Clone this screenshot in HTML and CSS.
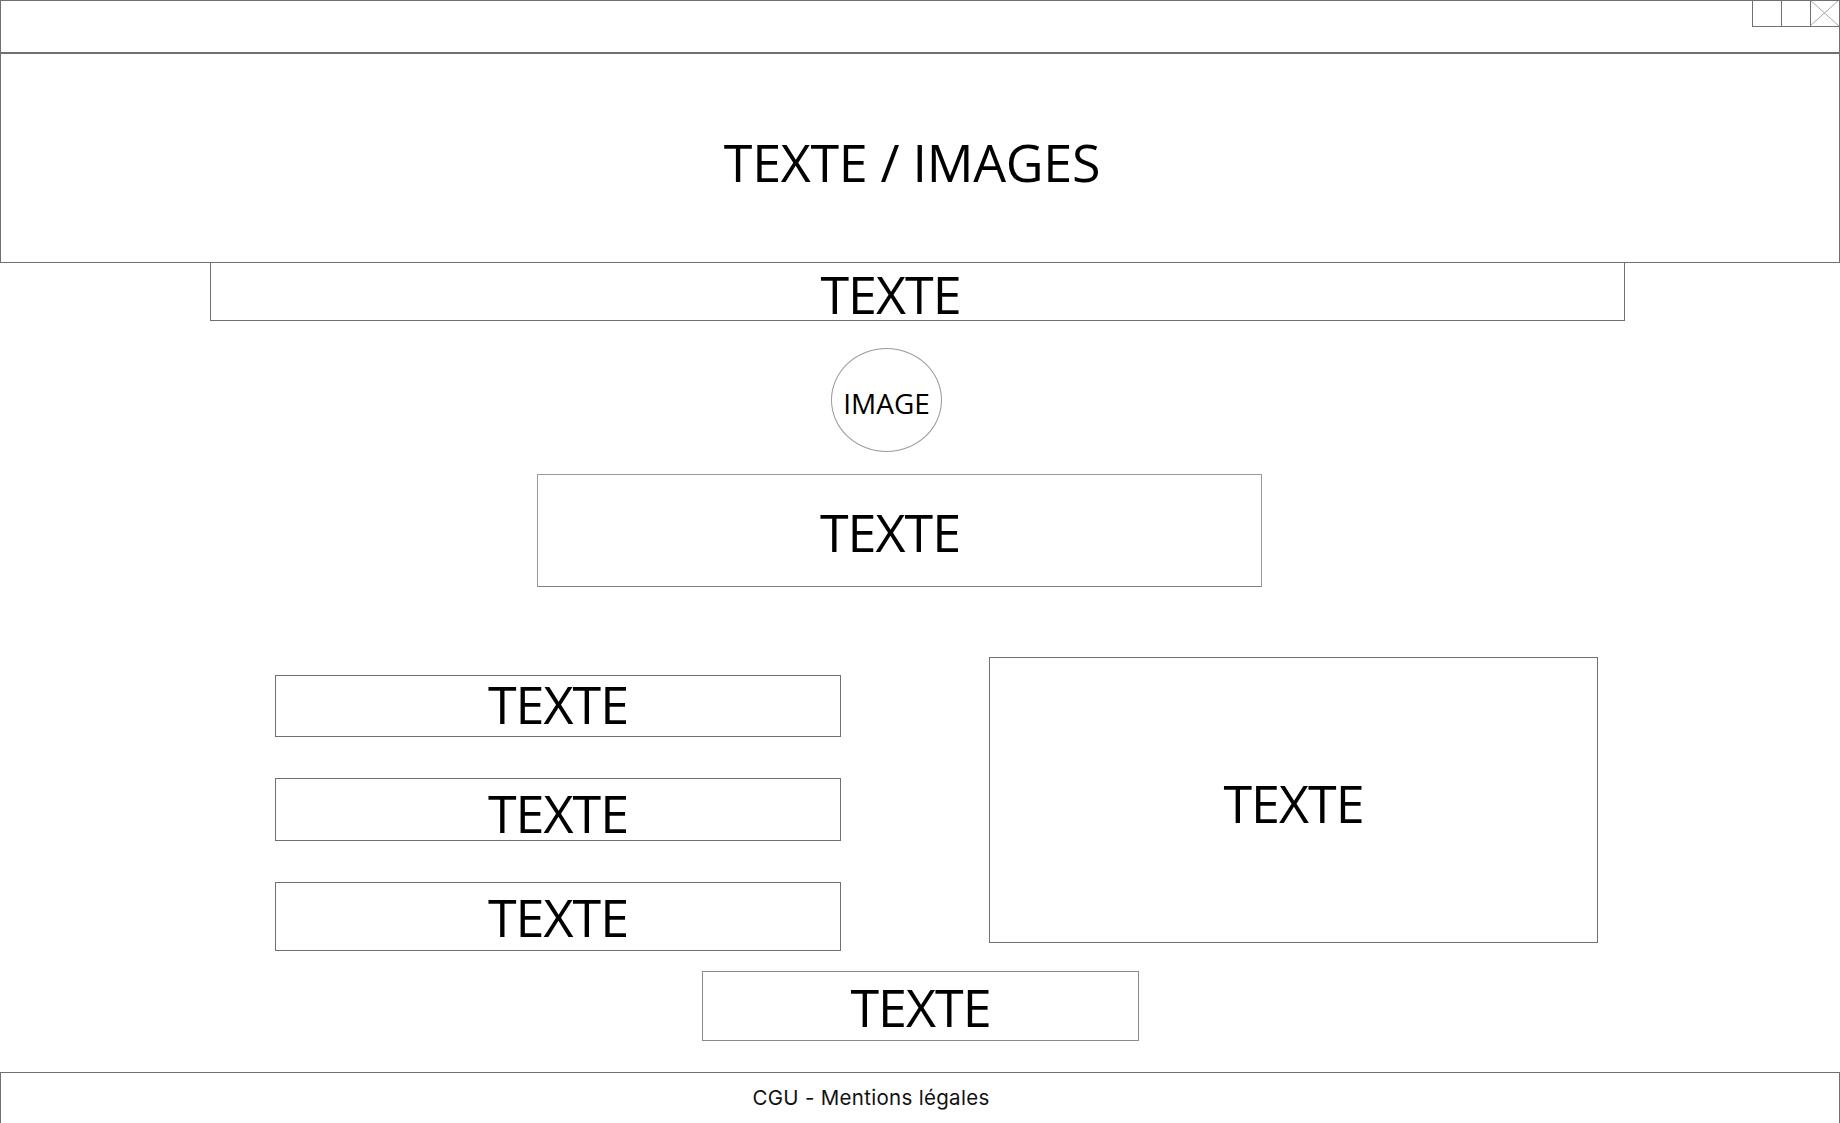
FILE: index.html
```html
<!DOCTYPE html>
<html lang="fr">
<head>
<meta charset="utf-8">
<title>Maquette</title>
<link rel="stylesheet" href="styles.css">
</head>
<body>
<div class="window">
  <div class="titlebar">
    <div class="winbtns">
      <span class="winbtn"></span>
      <span class="winbtn"></span>
      <span class="winbtn close"><svg width="29" height="26" viewBox="0 0 29 26"><path d="M0 0L29 26M29 0L0 26" stroke="#a8a8a8" stroke-width="1" fill="none"/></svg></span>
    </div>
  </div>
  <div class="hero"><span class="hero-text">TEXTE / IMAGES</span></div>
  <div class="bar"><span class="big">TEXTE</span></div>
  <div class="avatar">IMAGE</div>
  <div class="midbox"><span class="big">TEXTE</span></div>
  <div class="columns">
    <div class="leftcol">
      <div class="item item-a"><span class="big">TEXTE</span></div>
      <div class="item item-b"><span class="big">TEXTE</span></div>
      <div class="item item-c"><span class="big">TEXTE</span></div>
    </div>
    <div class="rightbox"><span class="big">TEXTE</span></div>
  </div>
  <div class="bottombox"><span class="big">TEXTE</span></div>
  <footer class="footer"><span class="foot-text">CGU - Mentions légales</span></footer>
</div>
</body>
</html>
```

FILE: styles.css
```css
html, body {
  margin: 0;
  padding: 0;
  background: #ffffff;
}
body {
  font-family: "Open Sans", "Noto Sans", sans-serif;
  color: #000;
  width: 1840px;
  height: 1123px;
  overflow: hidden;
}
.window {
  display: flex;
  flex-direction: column;
  align-items: flex-start;
  width: 1840px;
  height: 1123px;
}
.titlebar {
  box-sizing: border-box;
  width: 1840px;
  height: 53px;
  border: 1px solid #707070;
  display: flex;
  justify-content: flex-end;
  align-items: flex-start;
}
.winbtns {
  display: flex;
  margin-top: -1px;
}
.winbtn {
  box-sizing: border-box;
  width: 29px;
  height: 27px;
  border: 1px solid #707070;
  border-right: none;
  display: block;
  overflow: hidden;
}
.winbtn.close svg { display: block; margin: -1px 0 0 -1px; }
.hero {
  box-sizing: border-box;
  width: 1840px;
  height: 210px;
  border: 1px solid #707070;
  display: flex;
  align-items: center;
  justify-content: center;
  padding-right: 16px;
  padding-top: 8px;
}
.hero-text {
  font-size: 52px;
  letter-spacing: -0.3px;
  line-height: 1;
}
.big {
  font-size: 52px;
  letter-spacing: -1px;
  line-height: 1;
}
.bar {
  box-sizing: border-box;
  margin-left: 210px;
  margin-top: -1px;
  width: 1415px;
  height: 59px;
  border: 1px solid #707070;
  display: flex;
  justify-content: center;
  align-items: flex-end;
  padding-right: 54px;
}
.avatar {
  box-sizing: border-box;
  margin-left: 831px;
  margin-top: 27px;
  width: 111px;
  height: 104px;
  border: 1px solid #9a9a9a;
  border-radius: 50%;
  display: flex;
  align-items: center;
  justify-content: center;
  font-size: 28px;
  padding-top: 6px;
  line-height: 1;
}
.midbox {
  box-sizing: border-box;
  margin-left: 537px;
  margin-top: 22px;
  width: 725px;
  height: 113px;
  border: 1px solid #9a9a9a;
  border-bottom-color: #808080;
  display: flex;
  align-items: center;
  justify-content: center;
  padding-right: 19px;
  padding-top: 2px;
}
.columns {
  display: flex;
  align-items: flex-start;
  margin-left: 275px;
  margin-top: 70px;
  gap: 148px;
}
.leftcol {
  display: flex;
  flex-direction: column;
  margin-top: 18px;
}
.item {
  box-sizing: border-box;
  width: 566px;
  border: 1px solid #707070;
  display: flex;
  align-items: center;
  justify-content: center;
}
.item-a { height: 62px; padding-bottom: 5px; }
.item-b { height: 63px; margin-top: 41px; padding-top: 6px; }
.item-c { height: 69px; margin-top: 41px; padding-top: 1px; }
.rightbox {
  box-sizing: border-box;
  width: 609px;
  height: 286px;
  border: 1px solid #707070;
  display: flex;
  align-items: center;
  justify-content: center;
  padding-top: 5px;
}
.bottombox {
  box-sizing: border-box;
  margin-left: 702px;
  margin-top: 20px;
  width: 437px;
  height: 70px;
  border: 1px solid #8a8a8a;
  display: flex;
  align-items: center;
  justify-content: center;
  padding-top: 2px;
}
.footer {
  box-sizing: border-box;
  margin-top: 31px;
  width: 1840px;
  flex: 1;
  border: 1px solid #707070;
  border-bottom: none;
  display: flex;
  align-items: center;
  justify-content: center;
  padding-right: 98px;
}
.foot-text {
  font-family: "Inter", "Lato", sans-serif;
  font-size: 20.5px;
  letter-spacing: 0.3px;
  line-height: 1;
  color: #111;
}
```
